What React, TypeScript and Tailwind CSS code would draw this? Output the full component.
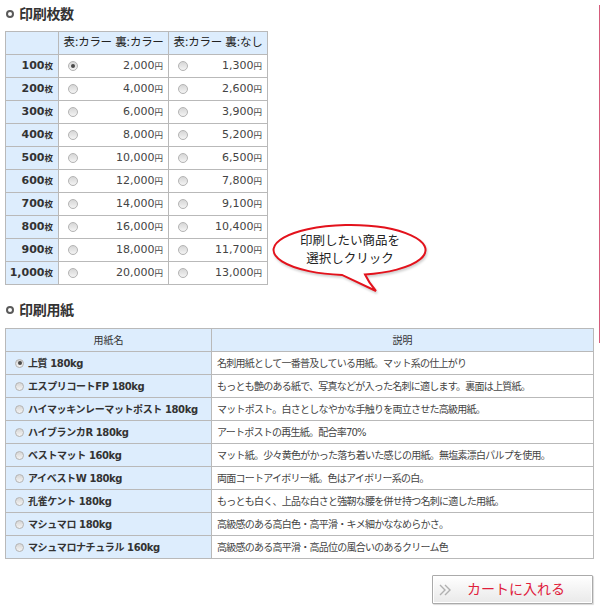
import React from "react";

const FONT = { fontFamily: '"DejaVu Sans", "Noto Sans CJK JP", sans-serif' };

const PRICES: [string, string, string][] = [
  ["100", "2,000", "1,300"],
  ["200", "4,000", "2,600"],
  ["300", "6,000", "3,900"],
  ["400", "8,000", "5,200"],
  ["500", "10,000", "6,500"],
  ["600", "12,000", "7,800"],
  ["700", "14,000", "9,100"],
  ["800", "16,000", "10,400"],
  ["900", "18,000", "11,700"],
  ["1,000", "20,000", "13,000"],
];

const PAPERS: [string, string][] = [
  ["上質 180kg", "名刺用紙として一番普及している用紙。マット系の仕上がり"],
  ["エスプリコートFP 180kg", "もっとも艶のある紙で、写真などが入った名刺に適します。裏面は上質紙。"],
  ["ハイマッキンレーマットポスト 180kg", "マットポスト。白さとしなやかな手触りを両立させた高級用紙。"],
  ["ハイブランカR 180kg", "アートポストの再生紙。配合率70%"],
  ["ベストマット 160kg", "マット紙。少々黄色がかった落ち着いた感じの用紙。無塩素漂白パルプを使用。"],
  ["アイベストW 180kg", "両面コートアイボリー紙。色はアイボリー系の白。"],
  ["孔雀ケント 180kg", "もっとも白く、上品な白さと強靭な腰を併せ持つ名刺に適した用紙。"],
  ["マシュマロ 180kg", "高級感のある高白色・高平滑・キメ細かななめらかさ。"],
  ["マシュマロナチュラル 160kg", "高級感のある高平滑・高品位の風合いのあるクリーム色"],
];

function Radio({ checked = false, size = 10 }: { checked?: boolean; size?: number }) {
  return (
    <span
      className={`relative inline-flex shrink-0 items-center justify-center rounded-full border border-[#b4b4b4] bg-gradient-to-b from-[#d6d6d6] to-[#f4f4f4] ${
        size === 10 ? "h-[10px] w-[10px]" : "h-[9px] w-[9px]"
      }`}
    >
      {checked ? <span className="h-[4px] w-[4px] rounded-full bg-[#4a4a4a]" /> : null}
    </span>
  );
}

function Heading({ children }: { children: React.ReactNode }) {
  return (
    <div className="flex h-[20px] items-center gap-[5px] pl-[6px]">
      <span className="h-[8px] w-[8px] rounded-full border-2 border-[#5a5a5a]" />
      <span className="text-[14px] font-bold tracking-[-0.3px] text-[#333]">{children}</span>
    </div>
  );
}

function Bubble() {
  return (
    <div className="absolute left-[270px] top-[191px] h-[75px] w-[162px]">
      <svg width="162" height="75" viewBox="0 0 162 75" className="drop-shadow-[1px_2px_1px_rgba(0,0,0,0.18)]">
        <path
          d="M72 52.9 A76 25 0 1 1 95 52.5 Q99 61 106 69 Q89 61 72 52.9 Z"
          fill="#fff"
          stroke="#e3121c"
          strokeWidth="2"
        />
      </svg>
      <div className="absolute left-0 top-[10px] w-[160px] text-center text-[12.5px] leading-[18px] text-[#222]">
        印刷したい商品を
        <br />
        選択しクリック
      </div>
    </div>
  );
}

function CartButton() {
  return (
    <button
      type="button"
      className="flex h-[29px] w-[161px] items-center rounded-[1px] border border-[#aaa] bg-gradient-to-b from-[#ffffff] to-[#e9e9e9] shadow-[1px_1px_1px_rgba(0,0,0,0.15)] ring-1 ring-inset ring-white"
    >
      <svg width="14" height="12" viewBox="0 0 14 12" className="ml-[6px]">
        <polyline points="1,1 6,6 1,11" fill="none" stroke="#b0b0b0" strokeWidth="1.4" />
        <polyline points="6,1 11,6 6,11" fill="none" stroke="#b0b0b0" strokeWidth="1.4" />
      </svg>
      <span className="ml-[14px] text-[14px] tracking-[0px] text-[#e0203c]">カートに入れる</span>
    </button>
  );
}

export default function App() {
  return (
    <div className="flex w-[600px] bg-white" style={FONT}>
      <div className="w-[599px] pt-[4px]">
        <Heading>印刷枚数</Heading>

        <div className="relative mt-[7px] pl-[5px]">
          <table className="w-[263px] table-fixed border-collapse border border-[#b9b9b9] text-[#444]">
            <colgroup>
              <col className="w-[53px]" />
              <col className="w-[110px]" />
              <col className="w-[99px]" />
            </colgroup>
            <thead>
              <tr className="h-[23px] bg-[#ddedfd]">
                <th className="border border-[#b9b9b9] p-0" />
                <th className="border border-[#b9b9b9] p-0 text-center text-[11.5px] font-normal tracking-[-0.3px] text-[#222]">
                  表:カラー 裏:カラー
                </th>
                <th className="border border-[#b9b9b9] p-0 text-center text-[11.5px] font-normal tracking-[-0.3px] text-[#222]">
                  表:カラー 裏:なし
                </th>
              </tr>
            </thead>
            <tbody>
              {PRICES.map(([qty, a, b], i) => (
                <tr key={qty} className="h-[23px]">
                  <td className="border border-[#b9b9b9] bg-[#ddedfd] p-0 pr-[5px] text-right text-[11px] font-bold text-[#333]">
                    {qty}
                    <span className="text-[8.5px]">枚</span>
                  </td>
                  <td className="border border-[#b9b9b9] p-0">
                    <div className="flex items-center justify-between pl-[9px] pr-[5px]">
                      <Radio checked={i === 0} />
                      <span className="text-[11px]">
                        {a}
                        <span className="text-[8.5px]">円</span>
                      </span>
                    </div>
                  </td>
                  <td className="border border-[#b9b9b9] p-0">
                    <div className="flex items-center justify-between pl-[9px] pr-[5px]">
                      <Radio />
                      <span className="text-[11px]">
                        {b}
                        <span className="text-[8.5px]">円</span>
                      </span>
                    </div>
                  </td>
                </tr>
              ))}
            </tbody>
          </table>
          <Bubble />
        </div>

        <div className="mt-[15px]">
          <Heading>印刷用紙</Heading>
        </div>

        <div className="mt-[8px] pl-[5px]">
          <table className="w-[589px] table-fixed border-collapse border border-[#b9b9b9]">
            <colgroup>
              <col className="w-[206px]" />
              <col />
            </colgroup>
            <thead>
              <tr className="h-[23px] bg-[#ddedfd]">
                <th className="border border-[#b9b9b9] p-0 text-center text-[10px] font-normal text-[#333]">用紙名</th>
                <th className="border border-[#b9b9b9] p-0 text-center text-[10px] font-normal text-[#333]">説明</th>
              </tr>
            </thead>
            <tbody>
              {PAPERS.map(([name, desc], i) => (
                <tr key={name} className="h-[23px]">
                  <td className="border border-[#b9b9b9] bg-[#ddedfd] p-0">
                    <div className="flex items-center gap-[4px] pl-[9px] text-[10px] font-bold tracking-[-0.4px] text-[#333]">
                      <Radio checked={i === 0} size={9} />
                      <span>{name}</span>
                    </div>
                  </td>
                  <td className="border border-[#b9b9b9] p-0 pl-[5px] text-[10px] tracking-[-0.75px] text-[#444]">
                    {desc}
                  </td>
                </tr>
              ))}
            </tbody>
          </table>
        </div>

        <div className="mt-[16px] flex justify-end pr-[6px] pb-[5px]">
          <CartButton />
        </div>
      </div>
      <div className="mt-[5px] h-[338px] w-px bg-[#d65c7c]" />
    </div>
  );
}
